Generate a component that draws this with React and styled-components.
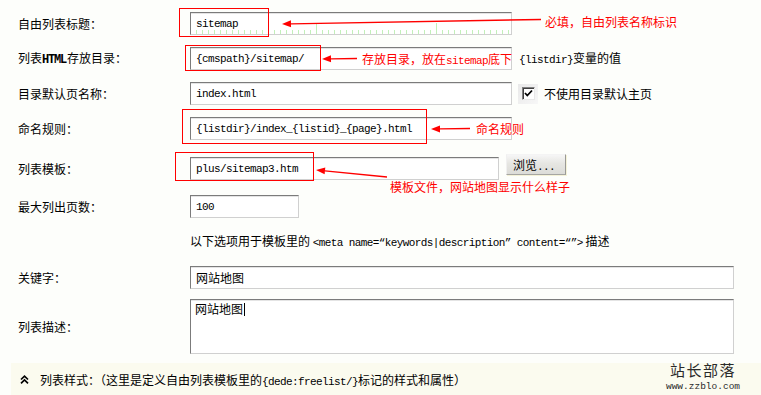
import React from "react";
import styled, { createGlobalStyle } from "styled-components";

const GlobalStyle = createGlobalStyle`
  html, body {
    margin: 0;
    padding: 0;
    background: #fdfefb;
  }
  body {
    font-family: "Noto Sans CJK SC", "Liberation Sans", sans-serif;
    font-size: 12px;
    color: #000;
  }
`;

const MONO = `"Liberation Mono", "Noto Sans CJK SC", monospace`;

const Page = styled.div`
  position: relative;
  width: 761px;
  height: 395px;
  overflow: hidden;
`;

const Form = styled.div`
  padding-top: 6px;
`;

const Row = styled.div`
  display: grid;
  grid-template-columns: 190px 1fr;
  align-items: center;
  height: ${(p) => p.$h}px;
`;

const Label = styled.div`
  padding-left: 18px;
  line-height: 16px;
  white-space: nowrap;
`;

const Field = styled.div`
  display: flex;
  align-items: center;
  gap: ${(p) => p.$gap ?? 7}px;
  line-height: 16px;
  white-space: nowrap;
`;

const Code = styled.span`
  font-family: ${MONO};
  font-size: 11px;
  letter-spacing: -0.6px;
`;

const LabelCode = styled.span`
  font-family: ${MONO};
  font-size: 12px;
  font-weight: 700;
  letter-spacing: -1.2px;
  margin-right: 1px;
`;

const ruler = `
  background-color: #fff;
  background-image:
    repeating-linear-gradient(90deg, transparent 0 119px, #c2f0b9 119px 120px),
    repeating-linear-gradient(90deg, #c2f0b9 0 1px, transparent 1px 6px);
  background-size: 100% 11px, 100% 4px;
  background-position: 6px bottom, 5px bottom;
  background-repeat: no-repeat;
`;

const Input = styled.input`
  box-sizing: border-box;
  width: ${(p) => p.$w}px;
  height: 23px;
  margin: 0;
  padding: 0 5px;
  background: #fff;
  border: 1px solid;
  border-color: #7b7b7b #d0d0d0 #d0d0d0 #7b7b7b;
  box-shadow: inset 0 1px 0 #e4e4e4;
  outline: none;
  color: #000;
  font-family: ${(p) => (p.$cjk ? `"Noto Sans CJK SC", sans-serif` : MONO)};
  font-size: ${(p) => (p.$cjk ? 12 : 11)}px;
  letter-spacing: ${(p) => (p.$cjk ? 0 : -0.6)}px;
  ${(p) => (p.$ruler ? ruler : "")}
`;

const TextArea = styled.div`
  box-sizing: border-box;
  width: 544px;
  height: 55px;
  padding: 1px 4px;
  background: #fff;
  border: 1px solid;
  border-color: #7b7b7b #d0d0d0 #d0d0d0 #7b7b7b;
  box-shadow: inset 0 1px 0 #e4e4e4;
  line-height: 16px;
`;

const Caret = styled.span`
  display: inline-block;
  width: 1px;
  height: 13px;
  margin-left: 1px;
  vertical-align: -2px;
  background: #000;
`;

const CheckWrap = styled.div`
  width: 20px;
  height: 20px;
  display: flex;
  align-items: center;
  justify-content: center;
  background: linear-gradient(135deg, #e9e9e9, #f7f7f7);
`;

const CheckBox = styled.span`
  box-sizing: border-box;
  width: 13px;
  height: 13px;
  display: flex;
  align-items: center;
  justify-content: center;
  background: #fff;
  border: 1px solid;
  border-color: #808080 #e8e8e8 #e8e8e8 #808080;
  box-shadow: inset 1px 1px 0 #404040;
`;

const BrowseButton = styled.button`
  box-sizing: border-box;
  width: 60px;
  height: 21px;
  margin: 0 0 8px 0;
  padding: 0 0 0 6px;
  text-align: left;
  font-family: "Noto Sans CJK SC", sans-serif;
  font-size: 12px;
  color: #000;
  background: linear-gradient(#f6f6f6, #e6e6e2 45%, #dcdcd8);
  border: 1px solid;
  border-color: #f4f4f4 #9a9a96 #a6a6a2 #f0f0f0;
  box-shadow: 1px 1px 0 #f4f2d8;
`;

const Bar = styled.div`
  display: flex;
  align-items: center;
  gap: 11px;
  height: 32px;
  margin: 3px 0 0 11px;
  padding: 0 19px 0 9px;
  background: #fbfbef;
  font-size: 12px;
  white-space: nowrap;
`;

const Overlay = styled.svg`
  position: absolute;
  left: 0;
  top: 0;
  pointer-events: none;
`;

const Note = styled.div`
  position: absolute;
  left: ${(p) => p.$x}px;
  top: ${(p) => p.$y}px;
  color: #ff0000;
  line-height: 16px;
  white-space: nowrap;
  pointer-events: none;
`;

const Watermark = styled.div`
  align-self: flex-start;
  margin: -1px 0 0 auto;
  width: 78px;
  display: flex;
  flex-direction: column;
  align-items: center;
  gap: 5px;
  color: #2a2a2a;
`;

const MarkTitle = styled.div`
  font-size: 15px;
  line-height: 15px;
  letter-spacing: 1.5px;
`;

const MarkUrl = styled.div`
  font-family: "Liberation Mono", monospace;
  font-size: 9.5px;
  line-height: 10px;
`;

const DoubleUp = () => (
  <svg width="9" height="9" viewBox="0 0 9 9">
    <path
      d="M1 4.5 L4.5 1.2 L8 4.5 M1 8.3 L4.5 5 L8 8.3"
      fill="none"
      stroke="#000"
      strokeWidth="1.7"
    />
  </svg>
);

const Arrow = ({ x1, y1, x2, y2 }) => {
  const ang = Math.atan2(y2 - y1, x2 - x1);
  const len = 9;
  const w = 3.5;
  const bx = x1 + Math.cos(ang) * len;
  const by = y1 + Math.sin(ang) * len;
  const px = -Math.sin(ang) * w;
  const py = Math.cos(ang) * w;
  return (
    <g>
      <line x1={bx} y1={by} x2={x2} y2={y2} stroke="#ff0000" strokeWidth="1.4" />
      <polygon
        points={`${x1},${y1} ${bx + px},${by + py} ${bx - px},${by - py}`}
        fill="#ff0000"
      />
    </g>
  );
};

const boxes = [
  { x: 179.5, y: 8.5, w: 89, h: 28 },
  { x: 185.5, y: 45.5, w: 135, h: 25 },
  { x: 182.5, y: 109.5, w: 244, h: 34 },
  { x: 175.5, y: 152.5, w: 138, h: 28 },
];

const arrows = [
  { x1: 282, y1: 24, x2: 541, y2: 19.5 },
  { x1: 322, y1: 59, x2: 357, y2: 58.5 },
  { x1: 431, y1: 129, x2: 470, y2: 128.5 },
  { x1: 316, y1: 170, x2: 387, y2: 177 },
];

const App = () => {
  return (
    <Page>
      <GlobalStyle />
      <Form>
        <Row $h={35}>
          <Label>自由列表标题：</Label>
          <Field>
            <Input $w={322} $ruler readOnly value="sitemap" />
          </Field>
        </Row>
        <Row $h={35}>
          <Label>
            列表<LabelCode>HTML</LabelCode>存放目录：
          </Label>
          <Field>
            <Input $w={322} readOnly value="{cmspath}/sitemap/" />
            <span>
              <Code>{"{listdir}"}</Code>变量的值
            </span>
          </Field>
        </Row>
        <Row $h={35}>
          <Label>目录默认页名称：</Label>
          <Field $gap={6}>
            <Input $w={322} readOnly value="index.html" />
            <CheckWrap>
              <CheckBox>
                <svg width="9" height="9" viewBox="0 0 9 9">
                  <path d="M1 4 L3.3 6.5 L8 1.5" fill="none" stroke="#000" strokeWidth="1.8" />
                </svg>
              </CheckBox>
            </CheckWrap>
            <span>不使用目录默认主页</span>
          </Field>
        </Row>
        <Row $h={35}>
          <Label>命名规则：</Label>
          <Field>
            <Input $w={322} readOnly value="{listdir}/index_{listid}_{page}.html" />
          </Field>
        </Row>
        <Row $h={45}>
          <Label>列表模板：</Label>
          <Field>
            <Input $w={309} readOnly value="plus/sitemap3.htm" />
            <BrowseButton type="button">
              浏览<Code>...</Code>
            </BrowseButton>
          </Field>
        </Row>
        <Row $h={31}>
          <Label>最大列出页数：</Label>
          <Field>
            <Input $w={109} readOnly value="100" />
          </Field>
        </Row>
        <Row $h={40}>
          <span />
          <Field>
            <span>
              以下选项用于模板里的{" "}
              <Code>{"<meta name=“keywords|description” content=“”>"}</Code> 描述
            </span>
          </Field>
        </Row>
        <Row $h={31}>
          <Label>关键字：</Label>
          <Field>
            <Input $w={544} $cjk readOnly value="网站地图" />
          </Field>
        </Row>
        <Row $h={67}>
          <Label>列表描述：</Label>
          <Field>
            <TextArea>
              网站地图
              <Caret />
            </TextArea>
          </Field>
        </Row>
      </Form>

      <Bar>
        <DoubleUp />
        <span>
          列表样式：（这里是定义自由列表模板里的<Code>{"{dede:freelist/}"}</Code>标记的样式和属性）
        </span>
        <Watermark>
          <MarkTitle>站长部落</MarkTitle>
          <MarkUrl>www.zzblo.com</MarkUrl>
        </Watermark>
      </Bar>

      <Overlay width="761" height="395" viewBox="0 0 761 395">
        {boxes.map((b, i) => (
          <rect key={i} x={b.x} y={b.y} width={b.w} height={b.h} fill="none" stroke="#ff0000" strokeWidth="1" />
        ))}
        {arrows.map((a, i) => (
          <Arrow key={i} {...a} />
        ))}
      </Overlay>

      <Note $x={545} $y={14}>必填，自由列表名称标识</Note>
      <Note $x={362} $y={51}>
        存放目录，放在<Code>sitemap</Code>底下
      </Note>
      <Note $x={476} $y={121}>命名规则</Note>
      <Note $x={390} $y={179}>模板文件，网站地图显示什么样子</Note>
    </Page>
  );
};

export default App;
